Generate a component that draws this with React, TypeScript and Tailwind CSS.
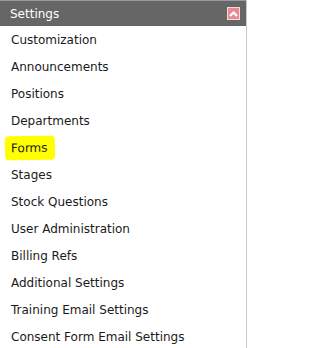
const items = [
  "Customization",
  "Announcements",
  "Positions",
  "Departments",
  "Forms",
  "Stages",
  "Stock Questions",
  "User Administration",
  "Billing Refs",
  "Additional Settings",
  "Training Email Settings",
  "Consent Form Email Settings",
];

export default function App() {
  return (
    <div className="w-[250px] h-[348px] overflow-hidden bg-white font-['DejaVu_Sans',sans-serif]">
      <div className="w-[247px] border-r border-[#c8c8c8] h-full">
        <div className="border-t border-[#9a9a9a] bg-[#666666] h-[26px] flex items-center justify-between pl-[10px] pr-[6px]">
          <span className="text-white text-[12px]">Settings</span>
          <div className="w-[13px] h-[13px] bg-[#e58c93] border border-[#f5dadc] flex items-center justify-center">
            <svg width="9" height="6" viewBox="0 0 9 6">
              <path d="M1 5 L4.5 1.5 L8 5" stroke="white" strokeWidth="2.2" fill="none" />
            </svg>
          </div>
        </div>
        <ul>
          {items.map((item) => (
            <li key={item} className="h-[27px] flex items-center pl-[11px] text-[12px] text-[#1a1a1a]">
              {item === "Forms" ? (
                <span className="bg-[#ffff00] -ml-[6px] pl-[6px] pr-[8px] py-[3px] rounded-[4px] -rotate-1">{item}</span>
              ) : (
                item
              )}
            </li>
          ))}
        </ul>
      </div>
    </div>
  );
}
